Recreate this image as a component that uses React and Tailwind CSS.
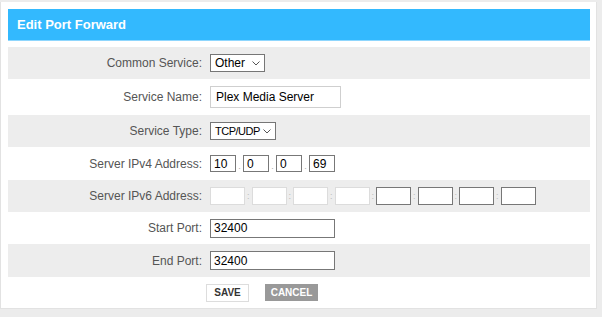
import React from "react";

const Chevron = () => (
  <svg width="8" height="5" viewBox="0 0 8 5" className="ml-auto mr-[4px] shrink-0">
    <path d="M0.5 0.5 L4 4 L7.5 0.5" fill="none" stroke="#555" strokeWidth="1" />
  </svg>
);

function Select({ value, w, text }) {
  return (
    <div className={`flex h-[18px] shrink-0 items-center border border-[#767676] bg-white pl-[4px] text-black ${text} ${w}`}>
      <span className="whitespace-nowrap">{value}</span>
      <Chevron />
    </div>
  );
}

function Row({ label, gray, h, children }) {
  return (
    <div className={`flex items-center ${h} ${gray ? "bg-[#ededed]" : "bg-white"}`}>
      <div className="w-[195px] pr-[1px] text-right text-[12px] text-[#555]">{label}</div>
      <div className="ml-[7px] flex items-center">{children}</div>
    </div>
  );
}

function Box({ w, h, border, value }) {
  return (
    <div className={`flex shrink-0 items-center bg-white pl-[3px] text-[12px] text-black ${w} ${h} border ${border}`}>
      {value}
    </div>
  );
}

export default function App() {
  const v6 = [0, 1, 2, 3, 4, 5, 6, 7];
  return (
    <div className="h-[317px] w-[602px] bg-[#ececec] pt-[2px]" style={{ fontFamily: '"Liberation Sans", Arial, sans-serif' }}>
      <div className="h-[307px] w-[597px] border-r border-b border-l border-[#e2e2e2] bg-white pt-[7px] pl-[7px] pr-[6px]">
        <div className="flex h-[31px] items-center bg-[#33b9fe] pl-[9px] text-[13px] font-bold text-white">Edit Port Forward</div>
        <div className="h-[1px] bg-[#8fd6fd]" />
        <div className="h-[6px]" />
        <Row label="Common Service:" gray h="h-[32px]">
          <Select value="Other" w="w-[55px]" text="text-[12px]" />
        </Row>
        <Row label="Service Name:" h="h-[36px]">
          <Box w="w-[131px]" h="h-[22px]" border="border-[#cfcfcf] pl-[5px]" value="Plex Media Server" />
        </Row>
        <Row label="Service Type:" gray h="h-[32px]">
          <Select value="TCP/UDP" w="w-[66px]" text="text-[11px] tracking-[-0.5px]" />
        </Row>
        <Row label="Server IPv4 Address:" h="h-[33px]">
          {["10", "0", "0", "69"].map((v, i) => (
            <React.Fragment key={i}>
              {i > 0 && <span className="flex h-[17px] w-[7px] items-end justify-center pb-[1px] text-[9px] leading-none text-[#aaa]">.</span>}
              <Box w="w-[26px]" h="h-[17px]" border="border-[#777]" value={v} />
            </React.Fragment>
          ))}
        </Row>
        <Row label="Server IPv6 Address:" gray h="h-[32px]">
          {v6.map((i) => (
            <React.Fragment key={i}>
              {i > 0 && <span className="flex h-[18px] w-[6.5px] shrink-0 items-center justify-center text-[9px] leading-none text-[#bbb]">:</span>}
              <Box w="w-[35px]" h="h-[18px]" border={i < 4 ? "border-[#dcdcdc]" : "border-[#777]"} value="" />
            </React.Fragment>
          ))}
        </Row>
        <Row label="Start Port:" h="h-[32px]">
          <Box w="w-[125px]" h="h-[19px]" border="border-[#777]" value="32400" />
        </Row>
        <Row label="End Port:" gray h="h-[33px]">
          <Box w="w-[125px]" h="h-[19px]" border="border-[#777]" value="32400" />
        </Row>
        <div className="flex h-[31px] items-center pl-[198px]">
          <div className="flex h-[18px] w-[43px] items-center justify-center border border-[#ddd] bg-white text-[10px] font-bold text-[#333]">SAVE</div>
          <div className="ml-[16px] flex h-[17px] w-[53px] items-center justify-center bg-[#999] text-[10px] font-bold text-white">CANCEL</div>
        </div>
      </div>
    </div>
  );
}
